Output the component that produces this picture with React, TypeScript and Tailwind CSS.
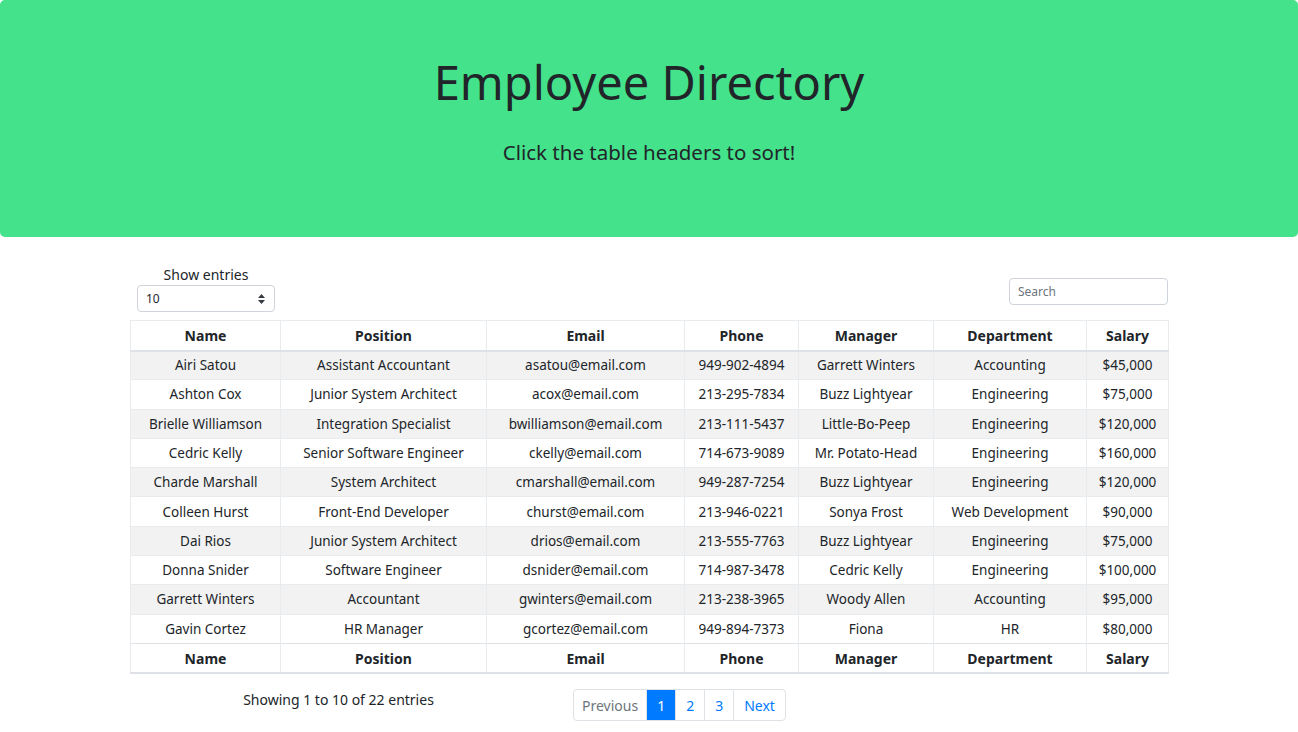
import { useState } from "react";

type Employee = {
  name: string;
  position: string;
  email: string;
  phone: string;
  manager: string;
  department: string;
  salary: string;
};

const employees: Employee[] = [
  { name: "Airi Satou", position: "Assistant Accountant", email: "asatou@email.com", phone: "949-902-4894", manager: "Garrett Winters", department: "Accounting", salary: "$45,000" },
  { name: "Ashton Cox", position: "Junior System Architect", email: "acox@email.com", phone: "213-295-7834", manager: "Buzz Lightyear", department: "Engineering", salary: "$75,000" },
  { name: "Brielle Williamson", position: "Integration Specialist", email: "bwilliamson@email.com", phone: "213-111-5437", manager: "Little-Bo-Peep", department: "Engineering", salary: "$120,000" },
  { name: "Cedric Kelly", position: "Senior Software Engineer", email: "ckelly@email.com", phone: "714-673-9089", manager: "Mr. Potato-Head", department: "Engineering", salary: "$160,000" },
  { name: "Charde Marshall", position: "System Architect", email: "cmarshall@email.com", phone: "949-287-7254", manager: "Buzz Lightyear", department: "Engineering", salary: "$120,000" },
  { name: "Colleen Hurst", position: "Front-End Developer", email: "churst@email.com", phone: "213-946-0221", manager: "Sonya Frost", department: "Web Development", salary: "$90,000" },
  { name: "Dai Rios", position: "Junior System Architect", email: "drios@email.com", phone: "213-555-7763", manager: "Buzz Lightyear", department: "Engineering", salary: "$75,000" },
  { name: "Donna Snider", position: "Software Engineer", email: "dsnider@email.com", phone: "714-987-3478", manager: "Cedric Kelly", department: "Engineering", salary: "$100,000" },
  { name: "Garrett Winters", position: "Accountant", email: "gwinters@email.com", phone: "213-238-3965", manager: "Woody Allen", department: "Accounting", salary: "$95,000" },
  { name: "Gavin Cortez", position: "HR Manager", email: "gcortez@email.com", phone: "949-894-7373", manager: "Fiona", department: "HR", salary: "$80,000" },
];

const columns = ["Name", "Position", "Email", "Phone", "Manager", "Department", "Salary"];
const widths = ["w-[150px]", "w-[206px]", "w-[198px]", "w-[114px]", "w-[135px]", "w-[153px]", "w-[82px]"];

function HeaderRow() {
  return (
    <tr className="h-[30px]">
      {columns.map((c, i) => (
        <th
          key={c}
          className={`${widths[i]} border-x border-[#e9ecef] font-bold text-[14px] text-[#212529] text-center p-0`}
        >
          {c}
        </th>
      ))}
    </tr>
  );
}

export default function App() {
  const [page, setPage] = useState(1);
  return (
    <div className="min-h-screen bg-white text-[#212529] font-['Noto_Sans',sans-serif]">
      <header className="h-[237px] bg-[#43e28b] rounded-[5px] flex flex-col items-center">
        <h1 className="mt-[52px] text-[47px] leading-[60px] font-normal">Employee Directory</h1>
        <p className="mt-[25px] text-[20.5px] leading-[30px]">Click the table headers to sort!</p>
      </header>

      <main className="w-[1038px] mx-auto pt-[29px]">
        <div className="flex items-end justify-between h-[54px] pb-[8px]">
          <div className="ml-[7px] flex flex-col items-center">
            <span className="text-[14px] leading-[18px] mb-[1px]">Show entries</span>
            <div className="relative w-[138px] h-[27px] border border-[#ced4da] rounded-[4px] flex items-center px-[8px] text-[12px]">
              10
              <svg className="absolute right-[9px] top-[8px]" width="7" height="10" viewBox="0 0 7 10">
                <path d="M3.5 0 L7 4 H0 Z M0 6 H7 L3.5 10 Z" fill="#343a40" />
              </svg>
            </div>
          </div>
          <div className="mb-[7px] w-[159px] h-[27px] border border-[#ced4da] rounded-[4px] flex items-center px-[8px] text-[12px] text-[#6c757d]">
            Search
          </div>
        </div>

        <table className="w-[1038px] table-fixed border-collapse border border-[#e9ecef]">
          <thead className="border-b-2 border-[#dee2e6]">
            <HeaderRow />
          </thead>
          <tbody>
            {employees.map((e, idx) => (
              <tr key={e.email} className={`h-[29.3px] border-t border-[#e9ecef] ${idx % 2 === 0 ? "bg-[#f2f2f2]" : "bg-white"}`}>
                {[e.name, e.position, e.email, e.phone, e.manager, e.department, e.salary].map((v, i) => (
                  <td key={i} className="border-x border-[#e9ecef] text-center text-[13.5px] p-0 whitespace-nowrap">
                    {v}
                  </td>
                ))}
              </tr>
            ))}
          </tbody>
          <tfoot className="border-t border-b-2 border-[#dee2e6]">
            <HeaderRow />
          </tfoot>
        </table>

        <div className="flex items-start mt-[14px]">
          <div className="w-[417px] text-center text-[14px] leading-[24px]">Showing 1 to 10 of 22 entries</div>
          <nav className="ml-[26px] mt-[1px] flex h-[32px] border border-[#dee2e6] rounded-[4px] text-[14px]">
            <button className="px-[8px] text-[#6c757d] border-r border-[#dee2e6]">Previous</button>
            {[1, 2, 3].map((n) => (
              <button
                key={n}
                onClick={() => setPage(n)}
                className={`w-[29px] border-r border-[#dee2e6] ${page === n ? "bg-[#007bff] text-white" : "text-[#007bff]"}`}
              >
                {n}
              </button>
            ))}
            <button className="px-[10px] text-[#007bff]">Next</button>
          </nav>
        </div>
      </main>
    </div>
  );
}
